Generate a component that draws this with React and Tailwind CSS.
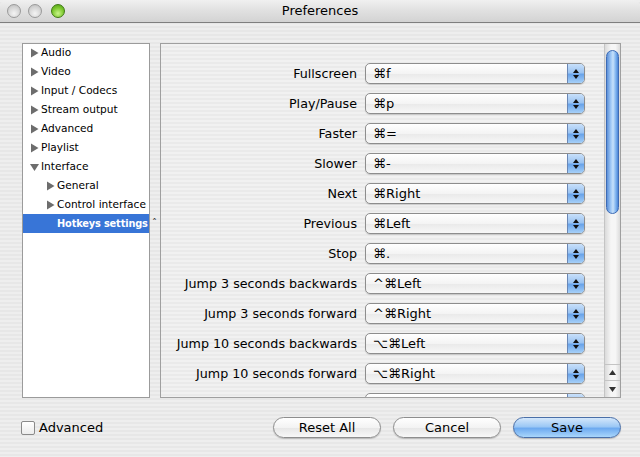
import React from "react";

const stripe =
  "bg-[repeating-linear-gradient(180deg,#eeeeee_0px,#eeeeee_2px,#e7e7e7_2px,#e7e7e7_4px)]";

function Tri({ down }) {
  return (
    <svg width="9" height="10" viewBox="0 0 9 10" className="shrink-0">
      {down ? (
        <path d="M0 2 L9 2 L4.5 9 Z" fill="#6d6d6d" />
      ) : (
        <path d="M1 0.5 L8.5 5 L1 9.5 Z" fill="#6d6d6d" />
      )}
    </svg>
  );
}

const tree = [
  { t: "Audio", l: 0 },
  { t: "Video", l: 0 },
  { t: "Input / Codecs", l: 0 },
  { t: "Stream output", l: 0 },
  { t: "Advanced", l: 0 },
  { t: "Playlist", l: 0 },
  { t: "Interface", l: 0, down: true },
  { t: "General", l: 1 },
  { t: "Control interface", l: 1 },
  { t: "Hotkeys settings", l: 1, sel: true },
];

const rows = [
  ["Fullscreen", "⌘f"],
  ["Play/Pause", "⌘p"],
  ["Faster", "⌘="],
  ["Slower", "⌘-"],
  ["Next", "⌘Right"],
  ["Previous", "⌘Left"],
  ["Stop", "⌘."],
  ["Jump 3 seconds backwards", "^⌘Left"],
  ["Jump 3 seconds forward", "^⌘Right"],
  ["Jump 10 seconds backwards", "⌥⌘Left"],
  ["Jump 10 seconds forward", "⌥⌘Right"],
  ["", ""],
];

function Popup({ v }) {
  return (
    <div className="w-[220px] h-[21px] shrink-0 flex rounded-[5px] border border-[#8d8d8d] bg-[linear-gradient(180deg,#ffffff_0%,#f4f4f4_50%,#e9e9e9_51%,#f7f7f7_100%)] overflow-hidden shadow-[0_1px_1px_rgba(0,0,0,0.15)]">
      <div className="flex-1 pl-[7px] text-[13px] leading-[19px] text-black">{v}</div>
      <div className="w-[17px] h-full border-l border-[#6a87b5] bg-[linear-gradient(180deg,#c8e0fa_0%,#9cc4f2_45%,#6aa4ea_55%,#a6d0f8_100%)] flex flex-col items-center justify-center gap-[2px]">
        <svg width="6" height="4" viewBox="0 0 6 4"><path d="M3 0 L6 4 L0 4 Z" fill="#111" /></svg>
        <svg width="6" height="4" viewBox="0 0 6 4"><path d="M0 0 L6 0 L3 4 Z" fill="#111" /></svg>
      </div>
    </div>
  );
}

function Button({ children, primary }) {
  return (
    <div
      className={
        "w-[108px] h-[21px] rounded-full border flex items-center justify-center text-[13px] text-black shadow-[0_1px_1px_rgba(0,0,0,0.2)] " +
        (primary
          ? "border-[#4a6fa8] bg-[linear-gradient(180deg,#d4e7fb_0%,#9cc8f5_45%,#6eaaf0_55%,#a9d6fb_100%)]"
          : "border-[#8e8e8e] bg-[linear-gradient(180deg,#ffffff_0%,#f3f3f3_50%,#e6e6e6_51%,#f8f8f8_100%)]")
      }
    >
      {children}
    </div>
  );
}

export default function App() {
  return (
    <div className={"w-[640px] h-[457px] overflow-hidden flex flex-col font-['DejaVu_Sans',sans-serif] " + stripe}>
      {/* title bar */}
      <div className="relative h-[23px] shrink-0 rounded-t-[6px] border-b border-[#7f7f7f] bg-[linear-gradient(180deg,#f0f0f0_0%,#e0e0e0_50%,#d3d3d3_100%)] flex items-center">
        <div className="flex items-center gap-[7px] pl-[7px]">
          <div className="w-[14px] h-[14px] rounded-full border border-[#9a9a9a] bg-[radial-gradient(circle_at_50%_70%,#f4f4f4_0%,#d6d6d6_55%,#b9b9b9_100%)]" />
          <div className="w-[14px] h-[14px] rounded-full border border-[#9a9a9a] bg-[radial-gradient(circle_at_50%_70%,#f4f4f4_0%,#d6d6d6_55%,#b9b9b9_100%)]" />
          <div className="ml-[2px] w-[14px] h-[14px] rounded-full border border-[#3f7a14] bg-[radial-gradient(circle_at_50%_70%,#c9f58a_0%,#7cc82e_55%,#4f9a16_100%)]" />
        </div>
        <div className="absolute inset-0 flex items-center justify-center text-[13px] text-black">Preferences</div>
      </div>

      {/* main area */}
      <div className="flex pl-[22px] pt-[20px]">
        <div className="relative w-[128px] h-[355px] bg-white border border-[#9b9b9b]">
          <div className="-mt-[1px]">
            {tree.map((it, i) => (
              <div
                key={i}
                className={
                  "h-[19px] flex items-center gap-[2px] leading-none " +
                  (it.sel ? "bg-[#3875d7] text-white font-bold text-[9.8px] tracking-[-0.15px]" : "text-black text-[10.6px]")
                }
                style={{ paddingLeft: it.l ? 23 : 7 }}
              >
                {it.sel ? <span className="w-[9px] shrink-0" /> : <Tri down={it.down} />}
                <span className="whitespace-nowrap">{it.t}</span>
              </div>
            ))}
          </div>
          <span className="absolute left-[129px] top-[175px] text-[10px] leading-none text-[#333]">ˆ</span>
        </div>

        <div className="ml-[10px] w-[461px] h-[355px] border border-[#9f9f9f] bg-[repeating-linear-gradient(180deg,#f1f1f1_0px,#f1f1f1_2px,#eaeaea_2px,#eaeaea_4px)] flex overflow-hidden">
          <div className="flex-1 flex flex-col gap-[9px] pt-[19px]">
            {rows.map(([l, v], i) => (
              <div key={i} className="flex items-center h-[21px] shrink-0">
                <div className="w-[196px] text-right text-[12.7px] text-black whitespace-nowrap">{l}</div>
                <div className="ml-[8px]">
                  <Popup v={v} />
                </div>
              </div>
            ))}
          </div>
          {/* scrollbar */}
          <div className="w-[16px] h-full border-l border-[#c4c4c4] bg-[linear-gradient(90deg,#dadada_0%,#f6f6f6_40%,#f6f6f6_70%,#dcdcdc_100%)] flex flex-col">
            <div className="mx-[1px] mt-[6px] h-[164px] rounded-full border border-[#3d6bb5] bg-[linear-gradient(90deg,#5b8fd8_0%,#9fc8f6_35%,#c6e1fb_55%,#7eb3ef_80%,#4c86d6_100%)]" />
            <div className="flex-1" />
            <div className="h-[16px] border-t border-[#c4c4c4] flex items-center justify-center">
              <svg width="7" height="5" viewBox="0 0 7 5"><path d="M3.5 0 L7 5 L0 5 Z" fill="#333" /></svg>
            </div>
            <div className="h-[17px] border-t border-[#c4c4c4] flex items-center justify-center">
              <svg width="7" height="5" viewBox="0 0 7 5"><path d="M0 0 L7 0 L3.5 5 Z" fill="#333" /></svg>
            </div>
          </div>
        </div>
      </div>

      {/* bottom bar */}
      <div className="flex items-center pl-[21px] pr-[19px] mt-[19px]">
        <div className="w-[14px] h-[14px] rounded-[2px] border border-[#8a8a8a] bg-[linear-gradient(180deg,#ffffff_0%,#ececec_100%)]" />
        <span className="ml-[4px] text-[13px] text-black">Advanced</span>
        <div className="flex-1" />
        <div className="flex gap-[12px]">
          <Button>Reset All</Button>
          <Button>Cancel</Button>
          <Button primary>Save</Button>
        </div>
      </div>
    </div>
  );
}
